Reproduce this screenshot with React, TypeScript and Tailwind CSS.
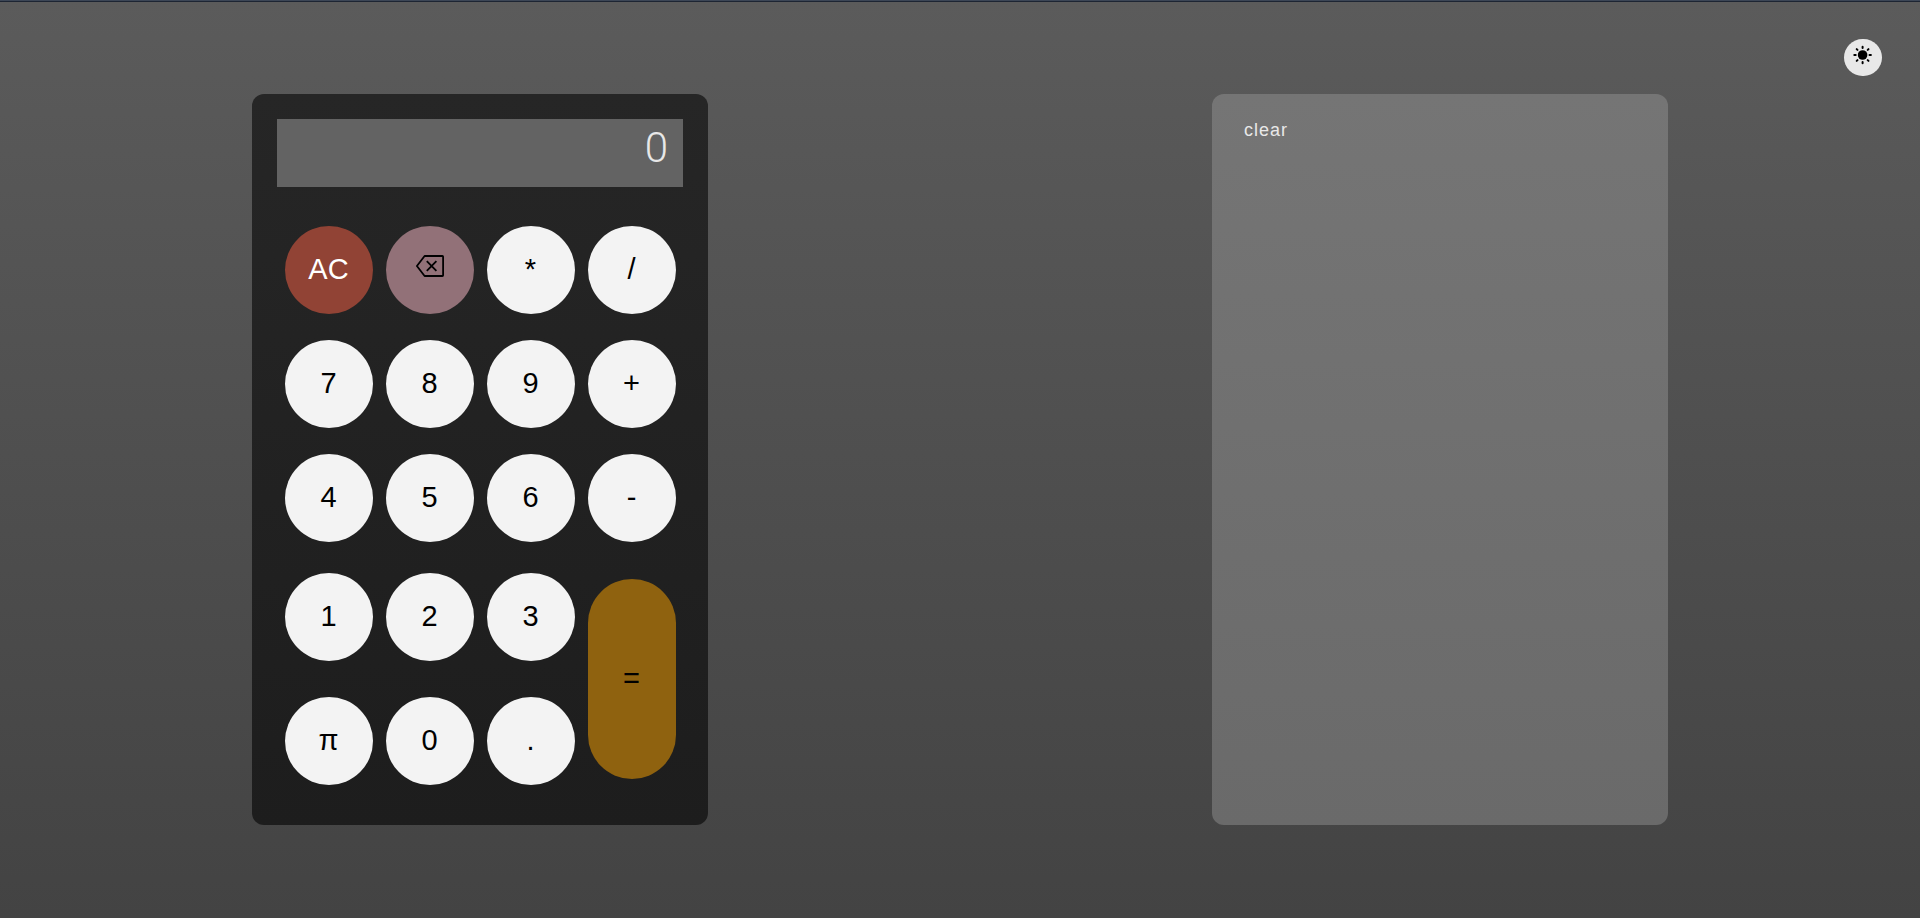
import { useState } from "react";

const KEYS = ["*", "/", "7", "8", "9", "+", "4", "5", "6", "-", "1", "2", "3", "=", "π", "0", "."];

const round = "size-[88px] self-center rounded-full bg-[#f3f3f3] pb-0.5 text-black cursor-pointer";

function SunIcon() {
  return (
    <svg width="20" height="20" viewBox="0 0 20 20" stroke="currentColor" strokeWidth="2" strokeLinecap="round" aria-hidden="true">
      <circle cx="9.6" cy="10" r="4.8" fill="currentColor" stroke="none" />
      <path d="M9.6 1.8v1.3M9.6 16.9v1.3M1.3 10h1.4M16.5 10h1.4M3.7 4.1l.8 .8M14.7 15.1l.8 .8M3.7 15.9l.8 -.8M14.7 4.9l.8 -.8" />
    </svg>
  );
}

function BackspaceIcon() {
  return (
    <svg width="28" height="22" viewBox="0 0 28 22" fill="none" stroke="currentColor" strokeWidth="1.8" strokeLinejoin="round" aria-hidden="true">
      <path d="M8.6 1H26.4Q27.1 1 27.1 1.7V20.3Q27.1 21 26.4 21H8.6L.9 11Z" />
      <path d="M10.8 6.2L20.4 15.8M20.4 6.2L10.8 15.8" />
    </svg>
  );
}

export default function App() {
  const [entry, setEntry] = useState("0");
  const [history, setHistory] = useState<string[]>([]);

  const evaluate = () => {
    const parts = entry.replace(/π/g, String(Math.PI)).match(/\d+\.?\d*|[+\-*/]/g) ?? [];
    const terms: number[] = [];
    let op = "+";
    for (const part of parts) {
      if (/^[+\-*/]$/.test(part)) {
        op = part;
        continue;
      }
      const n = Number(part);
      if (op === "*") terms.push((terms.pop() ?? 1) * n);
      else if (op === "/") terms.push((terms.pop() ?? 1) / n);
      else terms.push(op === "-" ? -n : n);
    }
    const result = String(terms.reduce((a, b) => a + b, 0));
    setHistory([...history, `${entry} = ${result}`]);
    setEntry(result);
  };

  const press = (key: string) => {
    if (key === "=") evaluate();
    else setEntry(entry === "0" && /[\dπ]/.test(key) ? key : entry + key);
  };

  return (
    <div className="relative min-h-screen bg-linear-to-b from-[#5b5b5b] to-[#434343] font-['Liberation_Sans',Arial,sans-serif]">
      <div className="h-0.5 border-t border-[#3c4656] bg-[#1d2533]" />
      <button
        type="button"
        aria-label="Toggle theme"
        className="absolute right-[38px] top-[39px] flex h-[37px] w-[38px] cursor-pointer justify-center rounded-full bg-[#e8e8e8] pt-[6px] text-black"
      >
        <SunIcon />
      </button>
      <main className="grid grid-cols-2 items-stretch justify-items-center pt-[92px] pb-[93px]">
        <section
          aria-label="Calculator"
          className="w-full max-w-[456px] rounded-xl bg-linear-to-b from-[#262626] to-[#1d1d1d] px-[25px] pt-[25px] pb-[22px]"
        >
          <output className="block h-[68px] bg-[#636363] pr-[15px] pt-[7px] text-right font-[Roboto,'Liberation_Sans',sans-serif] text-[42px] leading-[44px] font-light text-[#e8e8e8]">
            {entry}
          </output>
          <div className="mt-[26px] grid grid-cols-[repeat(4,88px)] grid-rows-[114px_114px_114px_124px_124px] justify-center gap-x-[13px] text-[29px] leading-8">
            <button
              type="button"
              onClick={() => setEntry("0")}
              className="size-[88px] cursor-pointer self-center rounded-full bg-[#914335] pb-0.5 text-white"
            >
              AC
            </button>
            <button
              type="button"
              aria-label="Backspace"
              onClick={() => setEntry(entry.slice(0, -1) || "0")}
              className="flex size-[88px] cursor-pointer items-center justify-center self-center rounded-full bg-[#927178] pb-2 text-black"
            >
              <BackspaceIcon />
            </button>
            {KEYS.map((key) => (
              <button
                key={key}
                type="button"
                onClick={() => press(key)}
                className={
                  key === "="
                    ? "row-span-2 h-[200px] w-[88px] cursor-pointer self-center rounded-full bg-[#8f620f] pb-0.5 text-black"
                    : round
                }
              >
                {key}
              </button>
            ))}
          </div>
        </section>
        <section
          aria-label="History"
          className="w-full max-w-[456px] rounded-xl bg-linear-to-b from-[#757575] to-[#6a6a6a] px-8 pt-6 text-[#e8e8e8]"
        >
          <button type="button" onClick={() => setHistory([])} className="cursor-pointer text-lg leading-6 tracking-[1px]">
            clear
          </button>
          <ul>
            {history.map((line, i) => (
              <li key={i}>{line}</li>
            ))}
          </ul>
        </section>
      </main>
    </div>
  );
}
